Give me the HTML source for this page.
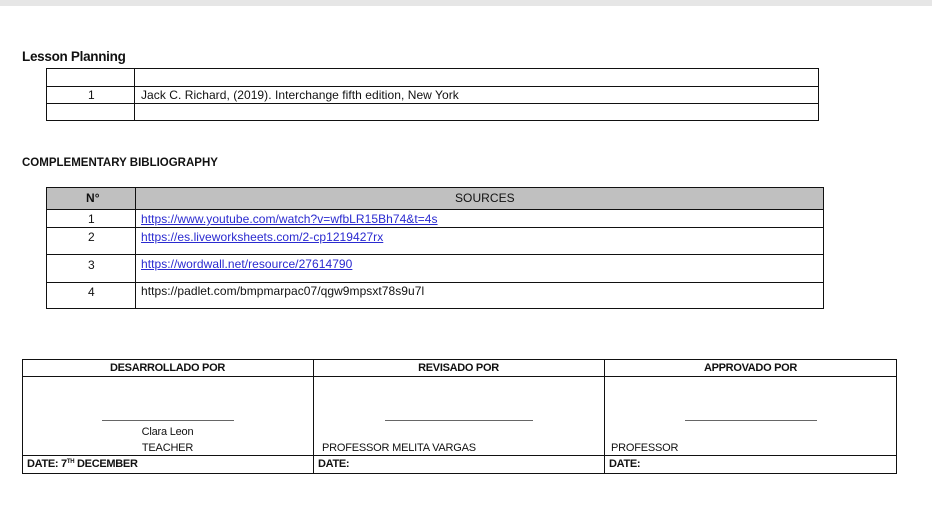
<!DOCTYPE html>
<html><head><style>
body{margin:0;width:932px;height:523px;background:#fff;position:relative;overflow:hidden;font-family:"Liberation Sans",Arial,sans-serif;color:#111;}
.a{position:absolute;}
.b{position:absolute;border:1px solid #111;box-sizing:border-box;}
.h{position:absolute;background:#111;height:1px;}
.v{position:absolute;background:#111;width:1px;}
.t{position:absolute;font-size:12px;letter-spacing:0.05px;white-space:nowrap;line-height:12px;}
.bd{font-weight:bold;}
.l{text-decoration:underline;color:#2a2ad0;}
</style></head><body>
<div class="a" style="left:0;top:0;width:932px;height:6px;background:#e6e6e6"></div>
<div class="t bd" style="left:22px;top:51px;font-size:13.5px;letter-spacing:-0.3px">Lesson Planning</div>
<div class="b" style="left:46px;top:68px;width:773px;height:53px"></div>
<div class="h" style="left:46px;top:86px;width:773px"></div>
<div class="h" style="left:46px;top:103px;width:773px"></div>
<div class="v" style="left:134px;top:68px;height:53px"></div>
<div class="t" style="left:88px;top:89px">1</div>
<div class="t" style="left:141px;top:89px">Jack C. Richard,  (2019). Interchange fifth edition, New York</div>

<div class="t bd" style="left:22px;top:157px;font-size:11.5px;letter-spacing:0">COMPLEMENTARY BIBLIOGRAPHY</div>
<div class="a" style="left:46px;top:188px;width:777px;height:21px;background:#c0c0c0"></div>
<div class="b" style="left:46px;top:187px;width:778px;height:122px"></div>
<div class="h" style="left:46px;top:209px;width:778px"></div>
<div class="h" style="left:46px;top:227px;width:778px"></div>
<div class="h" style="left:46px;top:254px;width:778px"></div>
<div class="h" style="left:46px;top:282px;width:778px"></div>
<div class="v" style="left:135px;top:187px;height:122px"></div>
<div class="t bd" style="left:86px;top:192px">N°</div>
<div class="t" style="left:455px;top:192px">SOURCES</div>
<div class="t" style="left:88px;top:213px">1</div>
<div class="t" style="left:88px;top:231px">2</div>
<div class="t" style="left:88px;top:259px">3</div>
<div class="t" style="left:88px;top:286px">4</div>
<div class="t l" style="left:141px;top:213px">https://www.youtube.com/watch?v=wfbLR15Bh74&amp;t=4s</div>
<div class="t l" style="left:141px;top:231px">https://es.liveworksheets.com/2-cp1219427rx</div>
<div class="t l" style="left:141px;top:258px">https://wordwall.net/resource/27614790</div>
<div class="t" style="left:141px;top:285px">https://padlet.com/bmpmarpac07/qgw9mpsxt78s9u7l</div>

<div class="b" style="left:22px;top:359px;width:875px;height:115px"></div>
<div class="h" style="left:22px;top:376px;width:875px"></div>
<div class="h" style="left:22px;top:455px;width:875px"></div>
<div class="v" style="left:313px;top:359px;height:115px"></div>
<div class="v" style="left:604px;top:359px;height:115px"></div>
<div class="t bd" style="left:22px;width:291px;text-align:center;top:362px;font-size:11px;letter-spacing:-0.3px">DESARROLLADO POR</div>
<div class="t bd" style="left:313px;width:291px;text-align:center;top:362px;font-size:11px;letter-spacing:-0.3px">REVISADO POR</div>
<div class="t bd" style="left:604px;width:293px;text-align:center;top:362px;font-size:11px;letter-spacing:-0.3px">APPROVADO POR</div>
<div class="a" style="left:102px;top:420px;width:132px;height:1px;background:#666"></div>
<div class="a" style="left:385px;top:420px;width:148px;height:1px;background:#666"></div>
<div class="a" style="left:685px;top:420px;width:132px;height:1px;background:#666"></div>
<div class="t" style="left:22px;width:291px;text-align:center;top:426px;font-size:11px;letter-spacing:-0.2px">Clara Leon</div>
<div class="t" style="left:22px;width:291px;text-align:center;top:442px;font-size:11px;letter-spacing:-0.2px">TEACHER</div>
<div class="t" style="left:322px;top:442px;font-size:11px;letter-spacing:-0.2px">PROFESSOR MELITA VARGAS</div>
<div class="t" style="left:611px;top:442px;font-size:11px;letter-spacing:-0.2px">PROFESSOR</div>
<div class="t bd" style="left:27px;top:458px;font-size:11px;letter-spacing:-0.3px">DATE: 7<sup style="font-size:6px;vertical-align:4px;line-height:0">TH</sup> DECEMBER</div>
<div class="t bd" style="left:318px;top:458px;font-size:11px;letter-spacing:-0.3px">DATE:</div>
<div class="t bd" style="left:609px;top:458px;font-size:11px;letter-spacing:-0.3px">DATE:</div>
</body></html>
